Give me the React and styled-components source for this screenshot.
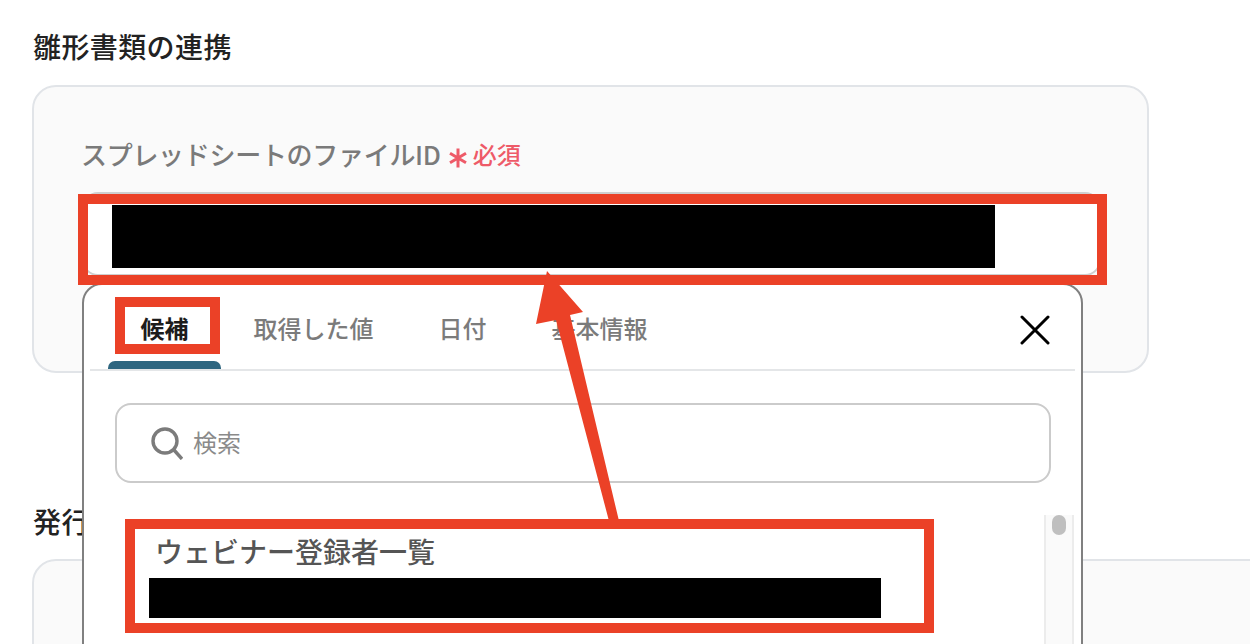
import React from "react";
import styled, { createGlobalStyle } from "styled-components";

const Global = createGlobalStyle`
  html, body { margin: 0; padding: 0; background: #fff; overflow: hidden; }
  body { font-family: "Noto Sans CJK JP", "Noto Sans", sans-serif; }
  * { box-sizing: border-box; }
`;

const Page = styled.div`
  position: relative;
  width: 1250px;
  height: 644px;
  overflow: hidden;
  padding: 26px 0 0 32px;
`;

const SectionTitle = styled.h2`
  margin: ${(p) => p.$top || 0}px 0 0 1px;
  height: 40px;
  font-size: 28px;
  line-height: 40px;
  font-weight: 500;
  color: #222;
  letter-spacing: 0.4px;
  white-space: nowrap;
`;

const Card = styled.section`
  margin-top: ${(p) => p.$top}px;
  width: ${(p) => p.$width}px;
  height: ${(p) => p.$height}px;
  background: #fafafa;
  border: 2px solid #e1e4e8;
  border-radius: 24px;
  padding: 47px 46px 0 47px;
`;

const FieldLabel = styled.div`
  display: flex;
  align-items: center;
  height: 38px;
  font-size: 26px;
  font-weight: 500;
  color: #7a7a7a;
  letter-spacing: -0.3px;
  white-space: nowrap;
`;

const Required = styled.span`
  display: inline-flex;
  align-items: center;
  margin-left: 7px;
  font-size: 24px;
  font-weight: 500;
  color: #ee5a68;
  letter-spacing: 0;
  gap: 5px;
`;

const Star = styled.svg`
  width: 20px;
  height: 22px;
  margin-top: 10px;
`;

const Input = styled.div`
  margin: 20px 0 0 1px;
  height: 84px;
  background: #fff;
  border: 2px solid #cfcfcf;
  border-radius: 16px;
  padding: 11px 0 0 28px;
`;

const Redaction = styled.div`
  width: ${(p) => p.$width}px;
  height: ${(p) => p.$height}px;
  background: #000;
`;

const Popup = styled.div`
  position: absolute;
  left: 82px;
  top: 283px;
  width: 1001px;
  height: 420px;
  background: #fff;
  border: 2px solid #808080;
  border-radius: 20px;
  padding: 0 6px;
`;

const TabBar = styled.div`
  display: flex;
  align-items: center;
  height: 86px;
  border-bottom: 2px solid #e4e6e8;
  padding: 0 25px 0 18px;
`;

const Tab = styled.div`
  position: relative;
  height: 84px;
  padding: 0 32.5px;
  display: flex;
  align-items: center;
  font-size: 24px;
  font-weight: ${(p) => (p.$active ? 700 : 500)};
  color: ${(p) => (p.$active ? "#1c1c1c" : "#7b7b7b")};
  white-space: nowrap;

  &::after {
    content: "";
    display: ${(p) => (p.$active ? "block" : "none")};
    position: absolute;
    left: 0;
    right: 0;
    bottom: 0;
    height: 8px;
    background: #2e6680;
    border-radius: 7px 7px 0 0;
  }
`;

const CloseButton = styled.div`
  margin-left: auto;
  margin-top: 5px;
  width: 30px;
  height: 30px;
  display: flex;
  align-items: center;
  justify-content: center;
`;

const SearchBox = styled.div`
  margin: 32px 24px 0 25px;
  height: 80px;
  border: 2px solid #cbcbcb;
  border-radius: 16px;
  display: flex;
  align-items: center;
  padding: 0 0 0 34px;
  gap: 10px;
  font-size: 24px;
  font-weight: 400;
  color: #8a8a8a;
  line-height: 34px;
`;

const SearchLabel = styled.span`
  margin-top: -2px;
`;

const ListArea = styled.div`
  display: flex;
  justify-content: space-between;
  margin-top: 32px;
  height: 140px;
  padding-right: 1px;
`;

const ListItem = styled.div`
  padding: 19px 0 0 59px;
`;

const ItemTitle = styled.div`
  height: 44px;
  padding-left: 6px;
  font-size: 28px;
  line-height: 34px;
  font-weight: 500;
  color: #555;
  white-space: nowrap;
`;

const ScrollTrack = styled.div`
  width: 30px;
  height: 100%;
  background: #fafafa;
  border-left: 2px solid #ececec;
  border-right: 2px solid #ececec;
  padding: 0 6px;
`;

const ScrollThumb = styled.div`
  height: 20px;
  background: #bfbfbf;
  border-radius: 8px;
`;

const Frame = styled.div`
  position: absolute;
  left: ${(p) => p.$x}px;
  top: ${(p) => p.$y}px;
  width: ${(p) => p.$w}px;
  height: ${(p) => p.$h}px;
  border: 10px solid #eb4127;
`;

const Arrow = styled.svg`
  position: absolute;
  left: 530px;
  top: 265px;
  width: 100px;
  height: 260px;
`;

export default function App() {
  return (
    <Page>
      <Global />
      <SectionTitle>雛形書類の連携</SectionTitle>
      <Card $top={19} $width={1117} $height={288}>
        <FieldLabel>
          スプレッドシートのファイルID
          <Required>
            <Star viewBox="0 0 20 22">
              <path d="M10 1.5V20.5M2 6.2L18 15.8M18 6.2L2 15.8" stroke="#ee5a68" strokeWidth="3" fill="none" />
            </Star>
            必須
          </Required>
        </FieldLabel>
        <Input>
          <Redaction $width={883} $height={63} />
        </Input>
      </Card>
      <SectionTitle $top={128}>発行書類の詳細設定</SectionTitle>
      <Card $top={18} $width={1300} $height={200} />

      <Popup>
        <TabBar>
          <Tab $active>候補</Tab>
          <Tab>取得した値</Tab>
          <Tab>日付</Tab>
          <Tab>基本情報</Tab>
          <CloseButton>
            <svg width="30" height="30" viewBox="0 0 30 30">
              <path d="M2 2L28 28M28 2L2 28" stroke="#000" strokeWidth="3" strokeLinecap="round" />
            </svg>
          </CloseButton>
        </TabBar>
        <SearchBox>
          <svg width="32" height="33" viewBox="0 0 32 33">
            <circle cx="14" cy="14" r="12" stroke="#7b7b7b" strokeWidth="3.4" fill="none" />
            <path d="M23 23L31 32" stroke="#7b7b7b" strokeWidth="3.4" />
          </svg>
          <SearchLabel>検索</SearchLabel>
        </SearchBox>
        <ListArea>
          <ListItem>
            <ItemTitle>ウェビナー登録者一覧</ItemTitle>
            <Redaction $width={732} $height={40} />
          </ListItem>
          <ScrollTrack>
            <ScrollThumb />
          </ScrollTrack>
        </ListArea>
      </Popup>

      <Frame $x={78} $y={194} $w={1029} $h={91} />
      <Frame $x={115} $y={297} $w={105} $h={57} />
      <Frame $x={125} $y={519} $w={809} $h={114} />
      <Arrow viewBox="0 0 100 260">
        <polygon points="17,6 53,47 40,50 89,256 79,256 26,55 6,59" fill="#eb4127" />
      </Arrow>
    </Page>
  );
}
